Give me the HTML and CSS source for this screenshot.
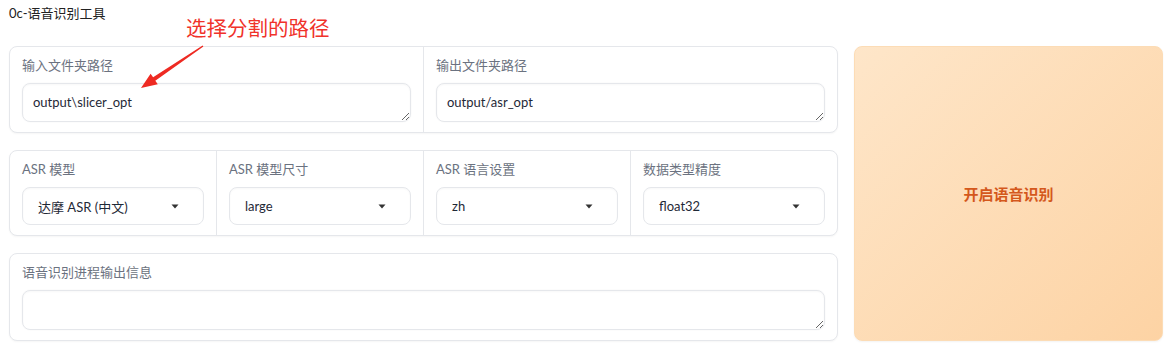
FILE: index.html
```html
<!DOCTYPE html>
<html lang="zh-CN">
<head>
    <meta charset="UTF-8">
    <title>0c-语音识别工具</title>
    <link rel="stylesheet" href="styles.css">
</head>
<body>
    <div class="app">
        <div class="title">0c-语音识别工具</div>

        <!-- Red annotation over the form -->
        <div class="note">选择分割的路径</div>
        <svg class="note-arrow" width="1170" height="356" viewBox="0 0 1170 356">
            <polygon points="202.6,45.4 153.1,77.3 150.6,73.8 141,88 157.8,84.2 155.3,80.7 203.4,46.6" fill="#ee2a22"/>
        </svg>

        <div class="main">
            <div class="column">
                <div class="card">
                    <div class="field">
                        <div class="label">输入文件夹路径</div>
                        <textarea class="input" rows="1">output\slicer_opt</textarea>
                    </div>
                    <div class="field">
                        <div class="label">输出文件夹路径</div>
                        <textarea class="input" rows="1">output/asr_opt</textarea>
                    </div>
                </div>

                <div class="card">
                    <div class="field">
                        <div class="label">ASR 模型</div>
                        <div class="select"><span>达摩 ASR (中文)</span><svg width="8" height="5" viewBox="0 0 8 5"><path d="M0.5 0.5h7L4 4.5z" fill="#333"/></svg></div>
                    </div>
                    <div class="field">
                        <div class="label">ASR 模型尺寸</div>
                        <div class="select"><span>large</span><svg width="8" height="5" viewBox="0 0 8 5"><path d="M0.5 0.5h7L4 4.5z" fill="#333"/></svg></div>
                    </div>
                    <div class="field">
                        <div class="label">ASR 语言设置</div>
                        <div class="select"><span>zh</span><svg width="8" height="5" viewBox="0 0 8 5"><path d="M0.5 0.5h7L4 4.5z" fill="#333"/></svg></div>
                    </div>
                    <div class="field">
                        <div class="label">数据类型精度</div>
                        <div class="select"><span>float32</span><svg width="8" height="5" viewBox="0 0 8 5"><path d="M0.5 0.5h7L4 4.5z" fill="#333"/></svg></div>
                    </div>
                </div>

                <div class="card">
                    <div class="field">
                        <div class="label">语音识别进程输出信息</div>
                        <textarea class="input output" rows="1"></textarea>
                    </div>
                </div>
            </div>

            <div class="run-btn">开启语音识别</div>
        </div>
    </div>
</body>
</html>
```

FILE: styles.css
```css
* {
    margin: 0;
    padding: 0;
    box-sizing: border-box;
}

body {
    background: #fff;
    font-family: Lato, "Noto Sans CJK SC", sans-serif;
    color: #1f2937;
}

.app {
    position: relative;
    width: 1170px;
    height: 356px;
    padding: 0 7px 0 9px;
}

.title {
    padding-top: 4px;
    font-size: 13px;
    line-height: 18px;
    height: 46px;
    color: #222;
}

/* annotation */
.note {
    position: absolute;
    left: 186px;
    top: 14px;
    font-family: "Noto Sans CJK SC", sans-serif;
    font-size: 20.5px;
    line-height: 26px;
    color: #f0322a;
}

.note-arrow {
    position: absolute;
    left: 0;
    top: 0;
    pointer-events: none;
    z-index: 5;
}

.main {
    display: flex;
    gap: 16px;
}

.column {
    width: 829px;
    display: flex;
    flex-direction: column;
    gap: 17px;
}

.card {
    display: flex;
    border: 1px solid #e5e7eb;
    border-radius: 8px;
    box-shadow: 0 1px 2px rgba(0, 0, 0, 0.04);
    background: #fff;
}

.field {
    flex: 1;
    padding: 9px 12px 10px;
    border-left: 1px solid #e5e7eb;
    display: flex;
    flex-direction: column;
}

.field:first-child {
    border-left: none;
}

.label {
    font-size: 13px;
    line-height: 18px;
    color: #6b7280;
    margin-bottom: 9px;
}

.input {
    display: block;
    width: 100%;
    height: 39px;
    padding: 9px 10px;
    border: 1px solid #e5e7eb;
    border-radius: 8px;
    box-shadow: 0 0 0 1px rgba(0, 0, 0, 0.01), inset 0 1px 2px rgba(0, 0, 0, 0.03);
    font-family: Lato, "Noto Sans CJK SC", sans-serif;
    font-size: 13px;
    line-height: 19px;
    color: #1f2937;
    background: #fff;
    resize: vertical;
    outline: none;
    overflow: hidden;
}

.input.output {
    height: 40px;
}

.select {
    height: 38px;
    display: flex;
    align-items: center;
    justify-content: space-between;
    padding: 0 24px 0 15px;
    border: 1px solid #e5e7eb;
    border-radius: 8px;
    box-shadow: inset 0 1px 2px rgba(0, 0, 0, 0.03);
    font-size: 13px;
    color: #1f2937;
}

.run-btn {
    width: 309px;
    display: flex;
    align-items: center;
    justify-content: center;
    border: 1px solid #fcdcb6;
    border-radius: 8px;
    background: linear-gradient(to bottom right, #fee6c9, #fdd3a4);
    box-shadow: 0 1px 2px rgba(0, 0, 0, 0.05);
    color: #d4581c;
    font-family: "Noto Sans CJK SC", sans-serif;
    font-size: 15px;
    font-weight: 700;
}
```
